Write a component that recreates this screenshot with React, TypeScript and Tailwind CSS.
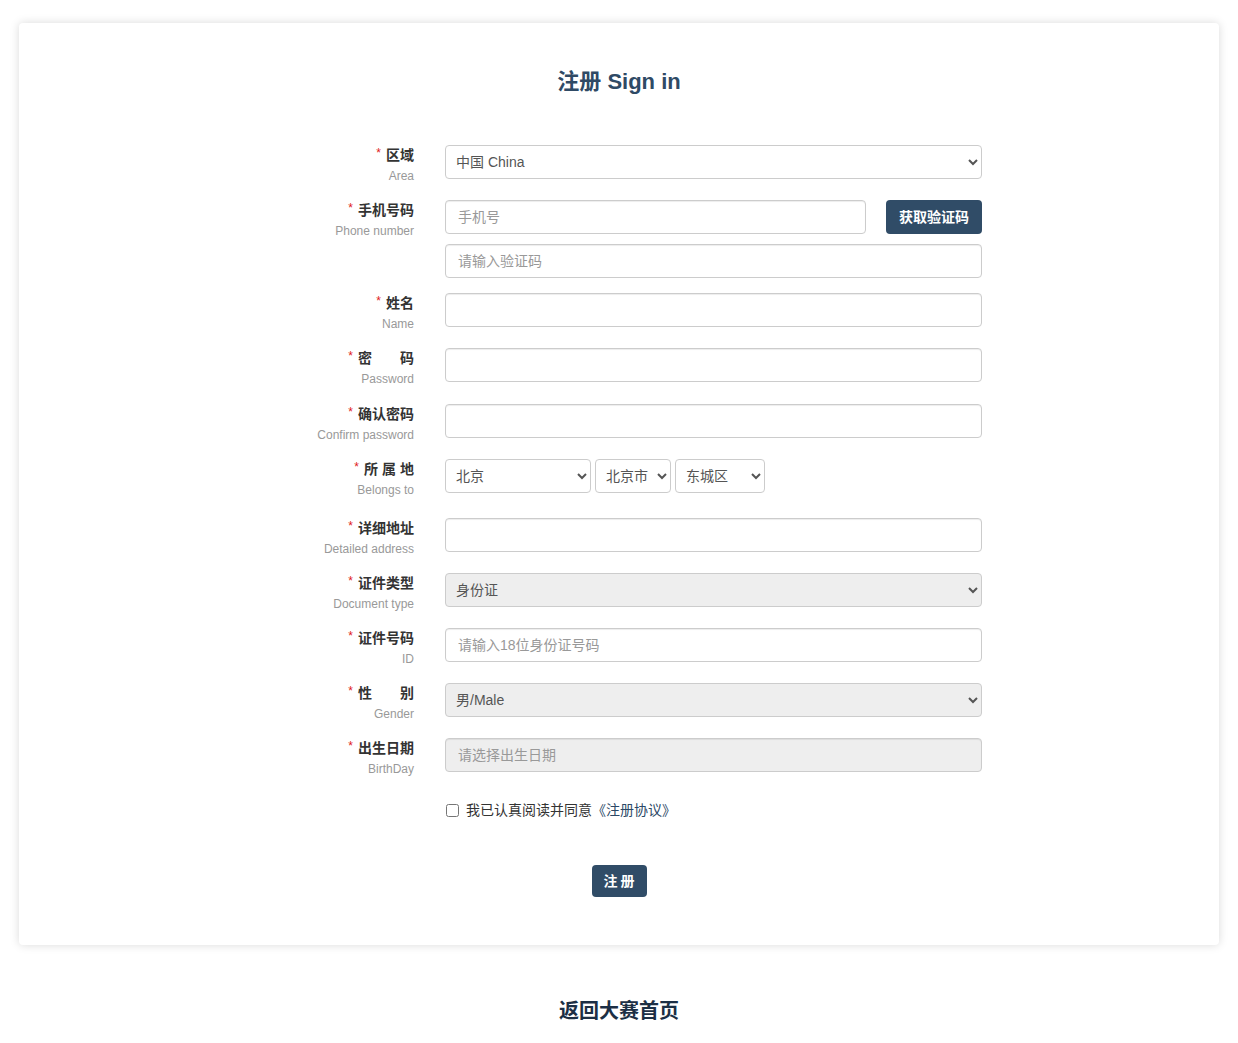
import React from "react";

const FONT = { fontFamily: '"Liberation Sans", Arial, "Noto Sans CJK SC", sans-serif' };

function Label({ zh, en }: { zh: React.ReactNode; en: string }) {
  return (
    <div className="w-[150px] shrink-0 flex flex-col items-end">
      <div className="h-[20px] leading-[20px] text-[14px] font-bold text-[#333] flex items-center">
        <span className="text-[#e02020] text-[12px] font-normal mr-[5px] relative top-[-2px]">*</span>
        {zh}
      </div>
      <div className="h-[18px] leading-[18px] mt-[2px] text-[12px] text-[#999]">{en}</div>
    </div>
  );
}

const inputBase =
  "h-[34px] border border-[#ccc] rounded-[4px] px-[12px] text-[14px] text-[#555] placeholder:text-[#999] outline-none shadow-[inset_0_1px_1px_rgba(0,0,0,0.075)]";
const selectCls =
  "h-[34px] border border-[#ccc] rounded-[4px] pl-[6px] pr-[2px] text-[14px] text-[#555] outline-none";

function Row({ label, children, mb = "mb-[15px]" }: { label: React.ReactNode; children: React.ReactNode; mb?: string }) {
  return (
    <div className={`flex items-start ${mb}`}>
      {label}
      <div className="ml-[31px]">{children}</div>
    </div>
  );
}

export default function App() {
  return (
    <div className="min-h-[1043px] bg-white" style={FONT}>
      <div className="mx-auto mt-[23px] w-[1200px] h-[922px] bg-white rounded-[4px] shadow-[0_0_10px_rgba(0,0,0,0.15)] pt-[43px]">
        <h1 className="text-center text-[22px] leading-[32px] font-bold text-[#2f4a65]">注册 Sign in</h1>
        <div className="pl-[245px] mt-[47px]">
          <Row label={<Label zh="区域" en="Area" />}>
            <select className={`${selectCls} w-[537px] bg-white`} defaultValue="cn">
              <option value="cn">中国 China</option>
            </select>
          </Row>
          <Row label={<Label zh="手机号码" en="Phone number" />} mb="mb-[15px]">
            <div className="flex items-start">
              <input className={`${inputBase} w-[421px] bg-white`} placeholder="手机号" />
              <button className="ml-[20px] h-[34px] w-[96px] rounded-[4px] bg-[#304c67] text-white text-[14px] font-bold">
                获取验证码
              </button>
            </div>
            <input className={`${inputBase} w-[537px] bg-white mt-[10px] block`} placeholder="请输入验证码" />
          </Row>
          <Row label={<Label zh="姓名" en="Name" />}>
            <input className={`${inputBase} w-[537px] bg-white`} />
          </Row>
          <Row label={<Label zh={<span>密<span className="inline-block w-[28px]" />码</span>} en="Password" />} mb="mb-[16px]">
            <input className={`${inputBase} w-[537px] bg-white`} type="password" />
          </Row>
          <Row label={<Label zh="确认密码" en="Confirm password" />}>
            <input className={`${inputBase} w-[537px] bg-white`} type="password" />
          </Row>
          <Row label={<Label zh={<span className="tracking-[4px] mr-[-4px]">所属地</span>} en="Belongs to" />} mb="mb-[19px]">
            <div className="flex gap-[4px]">
              <select className={`${selectCls} w-[146px] bg-white`}>
                <option>北京</option>
              </select>
              <select className={`${selectCls} w-[76px] bg-white`}>
                <option>北京市</option>
              </select>
              <select className={`${selectCls} w-[90px] bg-white`}>
                <option>东城区</option>
              </select>
            </div>
          </Row>
          <Row label={<Label zh="详细地址" en="Detailed address" />}>
            <input className={`${inputBase} w-[537px] bg-white`} />
          </Row>
          <Row label={<Label zh="证件类型" en="Document type" />}>
            <select className={`${selectCls} w-[537px] bg-[#eee]`}>
              <option>身份证</option>
            </select>
          </Row>
          <Row label={<Label zh="证件号码" en="ID" />}>
            <input className={`${inputBase} w-[537px] bg-white`} placeholder="请输入18位身份证号码" />
          </Row>
          <Row label={<Label zh={<span>性<span className="inline-block w-[28px]" />别</span>} en="Gender" />}>
            <select className={`${selectCls} w-[537px] bg-[#eee]`}>
              <option>男/Male</option>
            </select>
          </Row>
          <Row label={<Label zh="出生日期" en="BirthDay" />} mb="mb-0">
            <input className={`${inputBase} w-[537px] bg-[#eee]`} placeholder="请选择出生日期" readOnly />
          </Row>
          <div className="ml-[181px] mt-[22px] flex items-center h-[20px] text-[14px] text-[#333]">
            <input type="checkbox" className="w-[13px] h-[13px] m-0 ml-[1px]" />
            <span className="ml-[7px]">
              我已认真阅读并同意<span className="text-[#2b4866]">《注册协议》</span>
            </span>
          </div>
        </div>
        <div className="flex justify-center mt-[45px]">
          <button className="h-[32px] w-[55px] rounded-[4px] bg-[#304c67] text-white text-[14px] font-bold tracking-[3px] pl-[3px]">
            注册
          </button>
        </div>
      </div>
      <div className="text-center mt-[52px] text-[20px] leading-[28px] font-bold text-[#1c2f45]">返回大赛首页</div>
    </div>
  );
}
